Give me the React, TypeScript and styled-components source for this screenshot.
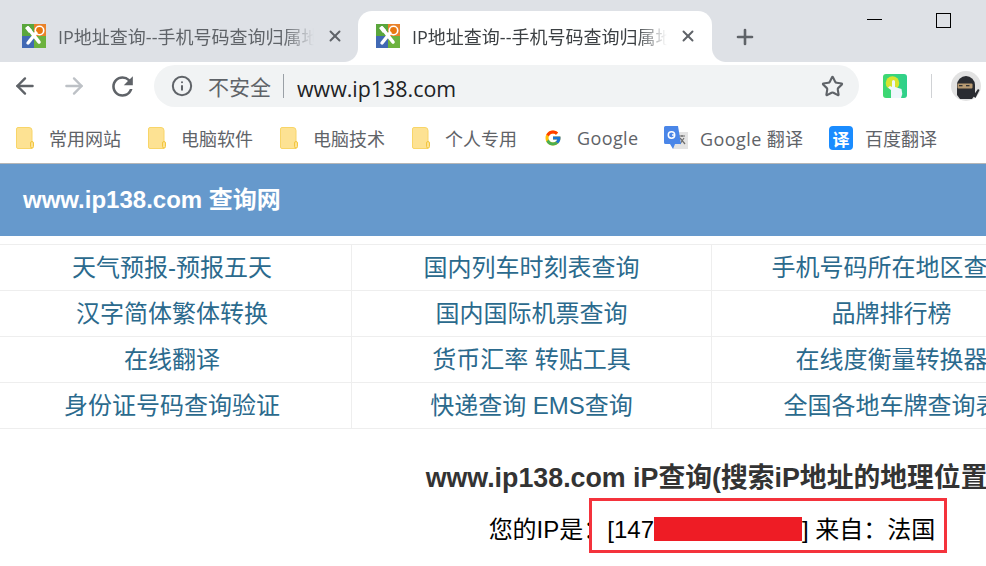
import React, { FunctionComponent } from 'react'
import styled, { createGlobalStyle } from 'styled-components'
import { ArrowLeft, ArrowRight, Info, Star, X, Plus } from 'lucide-react'
import { FcGoogle } from 'react-icons/fc'
import { MdRefresh } from 'react-icons/md'

const UI_FONT = `"Open Sans", "Noto Sans CJK SC", sans-serif`
const PAGE_FONT = `"Liberation Sans", "Noto Sans CJK SC", sans-serif`

const links = [
  ['天气预报-预报五天', '国内列车时刻表查询', '手机号码所在地区查询'],
  ['汉字简体繁体转换', '国内国际机票查询', '品牌排行榜'],
  ['在线翻译', '货币汇率 转贴工具', '在线度衡量转换器'],
  ['身份证号码查询验证', '快递查询 EMS查询', '全国各地车牌查询表'],
]

const TabFavicon: FunctionComponent = () => (
  <svg width="24" height="24" viewBox="0 0 24 24">
    <rect width="12" height="12" fill="#5aa63c" />
    <rect x="12" width="12" height="12" fill="#e9822a" />
    <rect y="12" width="12" height="12" fill="#4169b4" />
    <rect x="12" y="12" width="12" height="12" fill="#6cb23e" />
    <circle cx="17.5" cy="6.5" r="5" fill="#fff" />
    <circle cx="17.5" cy="6.5" r="3.4" fill="#e9770f" />
    <path d="M6 4 L17 18" stroke="#fff" strokeWidth="3.6" strokeLinecap="round" />
    <path d="M14 9 L6 19" stroke="#fff" strokeWidth="3.4" strokeLinecap="round" />
    <path d="M3 4 L7 9 L10 6 L6 2Z" fill="#fff" />
  </svg>
)

const FolderIcon: FunctionComponent = () => (
  <svg width="18" height="22" viewBox="0 0 18 22">
    <path d="M2 .5h11a3 3 0 0 1 3 3V21.500H2A1.500 1.500 0 0 1 .5 20V2A1.500 1.500 0 0 1 2 .5Z" fill="#fde293" stroke="#f8d568" />
    <rect x="14.500" y="14.500" width="3" height="6.500" rx="1.500" fill="#fde293" stroke="#f3c63f" />
  </svg>
)

const TranslateIcon: FunctionComponent = () => (
  <svg width="24" height="24" viewBox="0 0 24 24">
    <rect x="9" y="6" width="15" height="17" fill="#e3e3e3" />
    <path d="M15 10h6M18 9v2M16 18l4-6M16 12l5 6" stroke="#6d6d6d" strokeWidth="1.200" fill="none" />
    <path d="M1.500 0H14l3 18H11l-2 5-3-5H1.500A1.500 1.500 0 0 1 0 16.500V1.500A1.500 1.500 0 0 1 1.500 0Z" fill="#4a86e8" />
    <circle cx="7.500" cy="9" r="3.200" fill="none" stroke="#fff" strokeWidth="1.500" />
    <path d="M8 9h3" stroke="#fff" strokeWidth="1.400" />
  </svg>
)

const TouchExtension: FunctionComponent = () => (
  <svg width="24" height="24" viewBox="0 0 24 24">
    <defs>
      <linearGradient id="touch" x1="0" y1="0" x2="1" y2="0">
        <stop offset="0" stopColor="#3fd86f" />
        <stop offset="1" stopColor="#2fd08c" />
      </linearGradient>
    </defs>
    <rect width="24" height="24" rx="3" fill="url(#touch)" />
    <circle cx="9.500" cy="9" r="6.800" fill="#d9e32e" />
    <path d="M8 24V16L5 13.500 7 12l2 1V7.500a1.500 1.500 0 0 1 3 0V13l6.500 2 .8 5-1.300 4Z" fill="#eef6fb" />
  </svg>
)

const NinjaAvatar: FunctionComponent = () => (
  <svg width="30" height="30" viewBox="0 0 30 30">
    <circle cx="15" cy="15" r="15" fill="#e2e2e2" />
    <path d="M6 14a9 9 0 0 1 18 0v10l-3 4H9l-3-4Z" fill="#2a2c31" />
    <rect x="6.500" y="12.500" width="15" height="5" rx="1" fill="#b79a72" />
    <rect x="8" y="14" width="3.500" height="1.300" fill="#333" />
    <rect x="15" y="14" width="3.500" height="1.300" fill="#333" />
    <path d="M22 25l5-7 1.500 1-4 8Z" fill="#2a2c31" />
  </svg>
)

const App: FunctionComponent = () => (
  <Viewport>
    <GlobalStyle />
    <TabStrip>
      <Tab>
        <TabFavicon />
        <TabTitle>IP地址查询--手机号码查询归属地</TabTitle>
        <X size={18} strokeWidth={2.6} color="#5f6368" />
      </Tab>
      <Tab active>
        <TabFavicon />
        <TabTitle active>IP地址查询--手机号码查询归属地</TabTitle>
        <X size={18} strokeWidth={2.6} color="#5f6368" />
      </Tab>
      <NewTab>
        <Plus size={24} strokeWidth={2.6} color="#5f6368" />
      </NewTab>
      <WindowControls>
        <MinimizeLine />
        <MaximizeBox />
      </WindowControls>
    </TabStrip>

    <Toolbar>
      <NavButton>
        <ArrowLeft size={26} strokeWidth={2.2} color="#5f6368" />
      </NavButton>
      <NavButton>
        <ArrowRight size={26} strokeWidth={2.2} color="#bdc1c6" />
      </NavButton>
      <NavButton>
        <MdRefresh size={31} color="#5f6368" />
      </NavButton>
      <AddressBar>
        <Info size={22} strokeWidth={2.2} color="#5f6368" />
        <Insecure>不安全</Insecure>
        <AddressDivider />
        <Url>www.ip138.com</Url>
        <StarButton>
          <Star size={23} strokeWidth={2.2} color="#5f6368" />
        </StarButton>
      </AddressBar>
      <Extensions>
        <TouchExtension />
        <ToolbarDivider />
        <NinjaAvatar />
      </Extensions>
    </Toolbar>

    <BookmarksBar>
      {['常用网站', '电脑软件', '电脑技术', '个人专用'].map((name) => (
        <Bookmark key={name}>
          <FolderIcon />
          <span>{name}</span>
        </Bookmark>
      ))}
      <Bookmark>
        <FcGoogle size={18} />
        <LatinLabel>Google</LatinLabel>
      </Bookmark>
      <Bookmark tight>
        <TranslateIcon />
        <LatinLabel>Google 翻译</LatinLabel>
      </Bookmark>
      <Bookmark tight>
        <BaiduTile>译</BaiduTile>
        <span>百度翻译</span>
      </Bookmark>
    </BookmarksBar>

    <Page>
      <Banner>www.ip138.com 查询网</Banner>
      <LinkTable>
        {links.flat().map((text) => (
          <LinkCell key={text}>{text}</LinkCell>
        ))}
      </LinkTable>
      <PageTitle>www.ip138.com iP查询(搜索iP地址的地理位置)</PageTitle>
      <IpLine>
        您的IP是：
        <Marked>
          [147
          <Redaction />
          ] 来自：法国
          <MarkBox />
        </Marked>
      </IpLine>
    </Page>
  </Viewport>
)

const GlobalStyle = createGlobalStyle`
  html, body {
    margin: 0;
    padding: 0;
    overflow: hidden;
    background: #fff;
  }
`

const Viewport = styled.div`
  width: 986px;
  height: 566px;
  overflow: hidden;
  font-family: ${UI_FONT};
`

const TabStrip = styled.div`
  display: flex;
  align-items: flex-end;
  height: 62px;
  background: #dee1e6;
`

const Tab = styled.div<{ active?: boolean }>`
  position: relative;
  box-sizing: border-box;
  display: flex;
  align-items: center;
  flex: none;
  gap: 12px;
  width: ${(props) => (props.active ? '354px' : '358px')};
  height: 51px;
  padding: 0 14px 1px 22px;
  border-radius: 14px 14px 0 0;
  background: ${(props) => (props.active ? '#fff' : 'transparent')};

  ${(props) =>
    props.active &&
    `
    padding-left: 18px;
    padding-right: 15px;
    &::before, &::after {
      content: '';
      position: absolute;
      bottom: 0;
      width: 14px;
      height: 14px;
    }
    &::before {
      left: -14px;
      background: radial-gradient(circle at 0 0, #dee1e6 13.5px, #fff 14.5px);
    }
    &::after {
      right: -14px;
      background: radial-gradient(circle at 100% 0, #dee1e6 13.5px, #fff 14.5px);
    }
  `}
`

const TabTitle = styled.div<{ active?: boolean }>`
  flex: 1;
  min-width: 0;
  overflow: hidden;
  white-space: nowrap;
  font-size: 18px;
  color: ${(props) => (props.active ? '#3c4043' : '#5f6368')};
  mask-image: linear-gradient(to right, #000 88%, transparent 100%);
`

const NewTab = styled.div`
  display: flex;
  align-self: center;
  margin: 12px 0 0 21px;
`

const WindowControls = styled.div`
  display: flex;
  align-items: center;
  align-self: flex-start;
  gap: 54px;
  height: 15px;
  margin: 13px 35px 0 auto;
`

const MinimizeLine = styled.div`
  width: 15px;
  height: 1px;
  margin-top: -2px;
  background: #000;
`

const MaximizeBox = styled.div`
  box-sizing: border-box;
  width: 15px;
  height: 15px;
  border: 1px solid #000;
`

const Toolbar = styled.div`
  display: flex;
  align-items: center;
  height: 52px;
  padding-bottom: 4px;
  box-sizing: border-box;
  background: #fff;
`

const NavButton = styled.div`
  display: flex;
  justify-content: center;
  width: 48px;
  &:first-child {
    width: 50px;
  }
`

const AddressBar = styled.div`
  box-sizing: border-box;
  display: flex;
  align-items: center;
  width: 705px;
  height: 42px;
  margin-left: 8px;
  padding: 0 15px 0 17px;
  border-radius: 21px;
  background: #f1f3f4;
`

const Insecure = styled.span`
  margin-left: 15px;
  font-size: 21px;
  color: #5f6368;
`

const AddressDivider = styled.div`
  width: 1px;
  height: 24px;
  margin: 0 13px 0 12px;
  background: #9aa0a6;
`

const Url = styled.span`
  padding-top: 5px;
  font-size: 21.400px;
  color: #202124;
`

const StarButton = styled.div`
  display: flex;
  margin-left: auto;
`

const Extensions = styled.div`
  display: flex;
  align-items: center;
  margin-left: 24px;
`

const ToolbarDivider = styled.div`
  width: 1px;
  height: 24px;
  margin: 0 19px 0 24px;
  background: #d0d2d5;
`

const BookmarksBar = styled.div`
  box-sizing: border-box;
  display: flex;
  align-items: center;
  gap: 27px;
  height: 50px;
  padding: 0 0 1px 16px;
  border-bottom: 1px solid #b6b6b6;
  background: #fff;
`

const Bookmark = styled.div<{ tight?: boolean }>`
  display: flex;
  align-items: center;
  gap: ${(props) => (props.tight ? '12px' : '15px')};
  margin-left: ${(props) => (props.tight ? '-1.500px' : '0')};
  font-size: 18px;
  white-space: nowrap;
  color: #5f6368;
`

const LatinLabel = styled.span`
  letter-spacing: 0.400px;
`

const BaiduTile = styled.div`
  display: flex;
  align-items: center;
  justify-content: center;
  width: 24px;
  height: 24px;
  border-radius: 4px;
  font-size: 17px;
  font-weight: 700;
  color: #fff;
  background: #1a8cff;
`

const Page = styled.div`
  width: 1434px;
  font-family: ${PAGE_FONT};
`

const Banner = styled.div`
  box-sizing: border-box;
  height: 72px;
  padding-left: 23px;
  font-size: 24px;
  font-weight: 700;
  line-height: 72px;
  color: #fff;
  background: #6699cc;
`

const LinkTable = styled.div`
  display: grid;
  grid-template-columns: 352px 360px 360px;
  margin-top: 8px;
  border-top: 1px solid #eee;
`

const LinkCell = styled.div`
  box-sizing: border-box;
  height: 46px;
  border-right: 1px solid #eee;
  border-bottom: 1px solid #eee;
  font-size: 24px;
  line-height: 45px;
  text-align: center;
  white-space: nowrap;
  color: #2b6a8d;

  &:nth-child(3n + 1) {
    padding-right: 7px;
  }
`

const PageTitle = styled.div`
  margin-top: 29px;
  padding-right: 12px;
  font-size: 26.800px;
  font-weight: 700;
  line-height: 40px;
  text-align: center;
  white-space: nowrap;
  color: #333;
`

const IpLine = styled.div`
  margin-top: 15px;
  padding-right: 10px;
  font-size: 24px;
  line-height: 34px;
  text-align: center;
  white-space: nowrap;
  color: #000;
`

const Marked = styled.span`
  position: relative;
  display: inline-block;
`

const Redaction = styled.span`
  display: inline-block;
  width: 148px;
  height: 24px;
  vertical-align: -3px;
  background: #ee1c25;
`

const MarkBox = styled.span`
  position: absolute;
  top: -15px;
  right: -12px;
  bottom: -6px;
  left: -18px;
  border: 3px solid #f4333c;
`

export default App
